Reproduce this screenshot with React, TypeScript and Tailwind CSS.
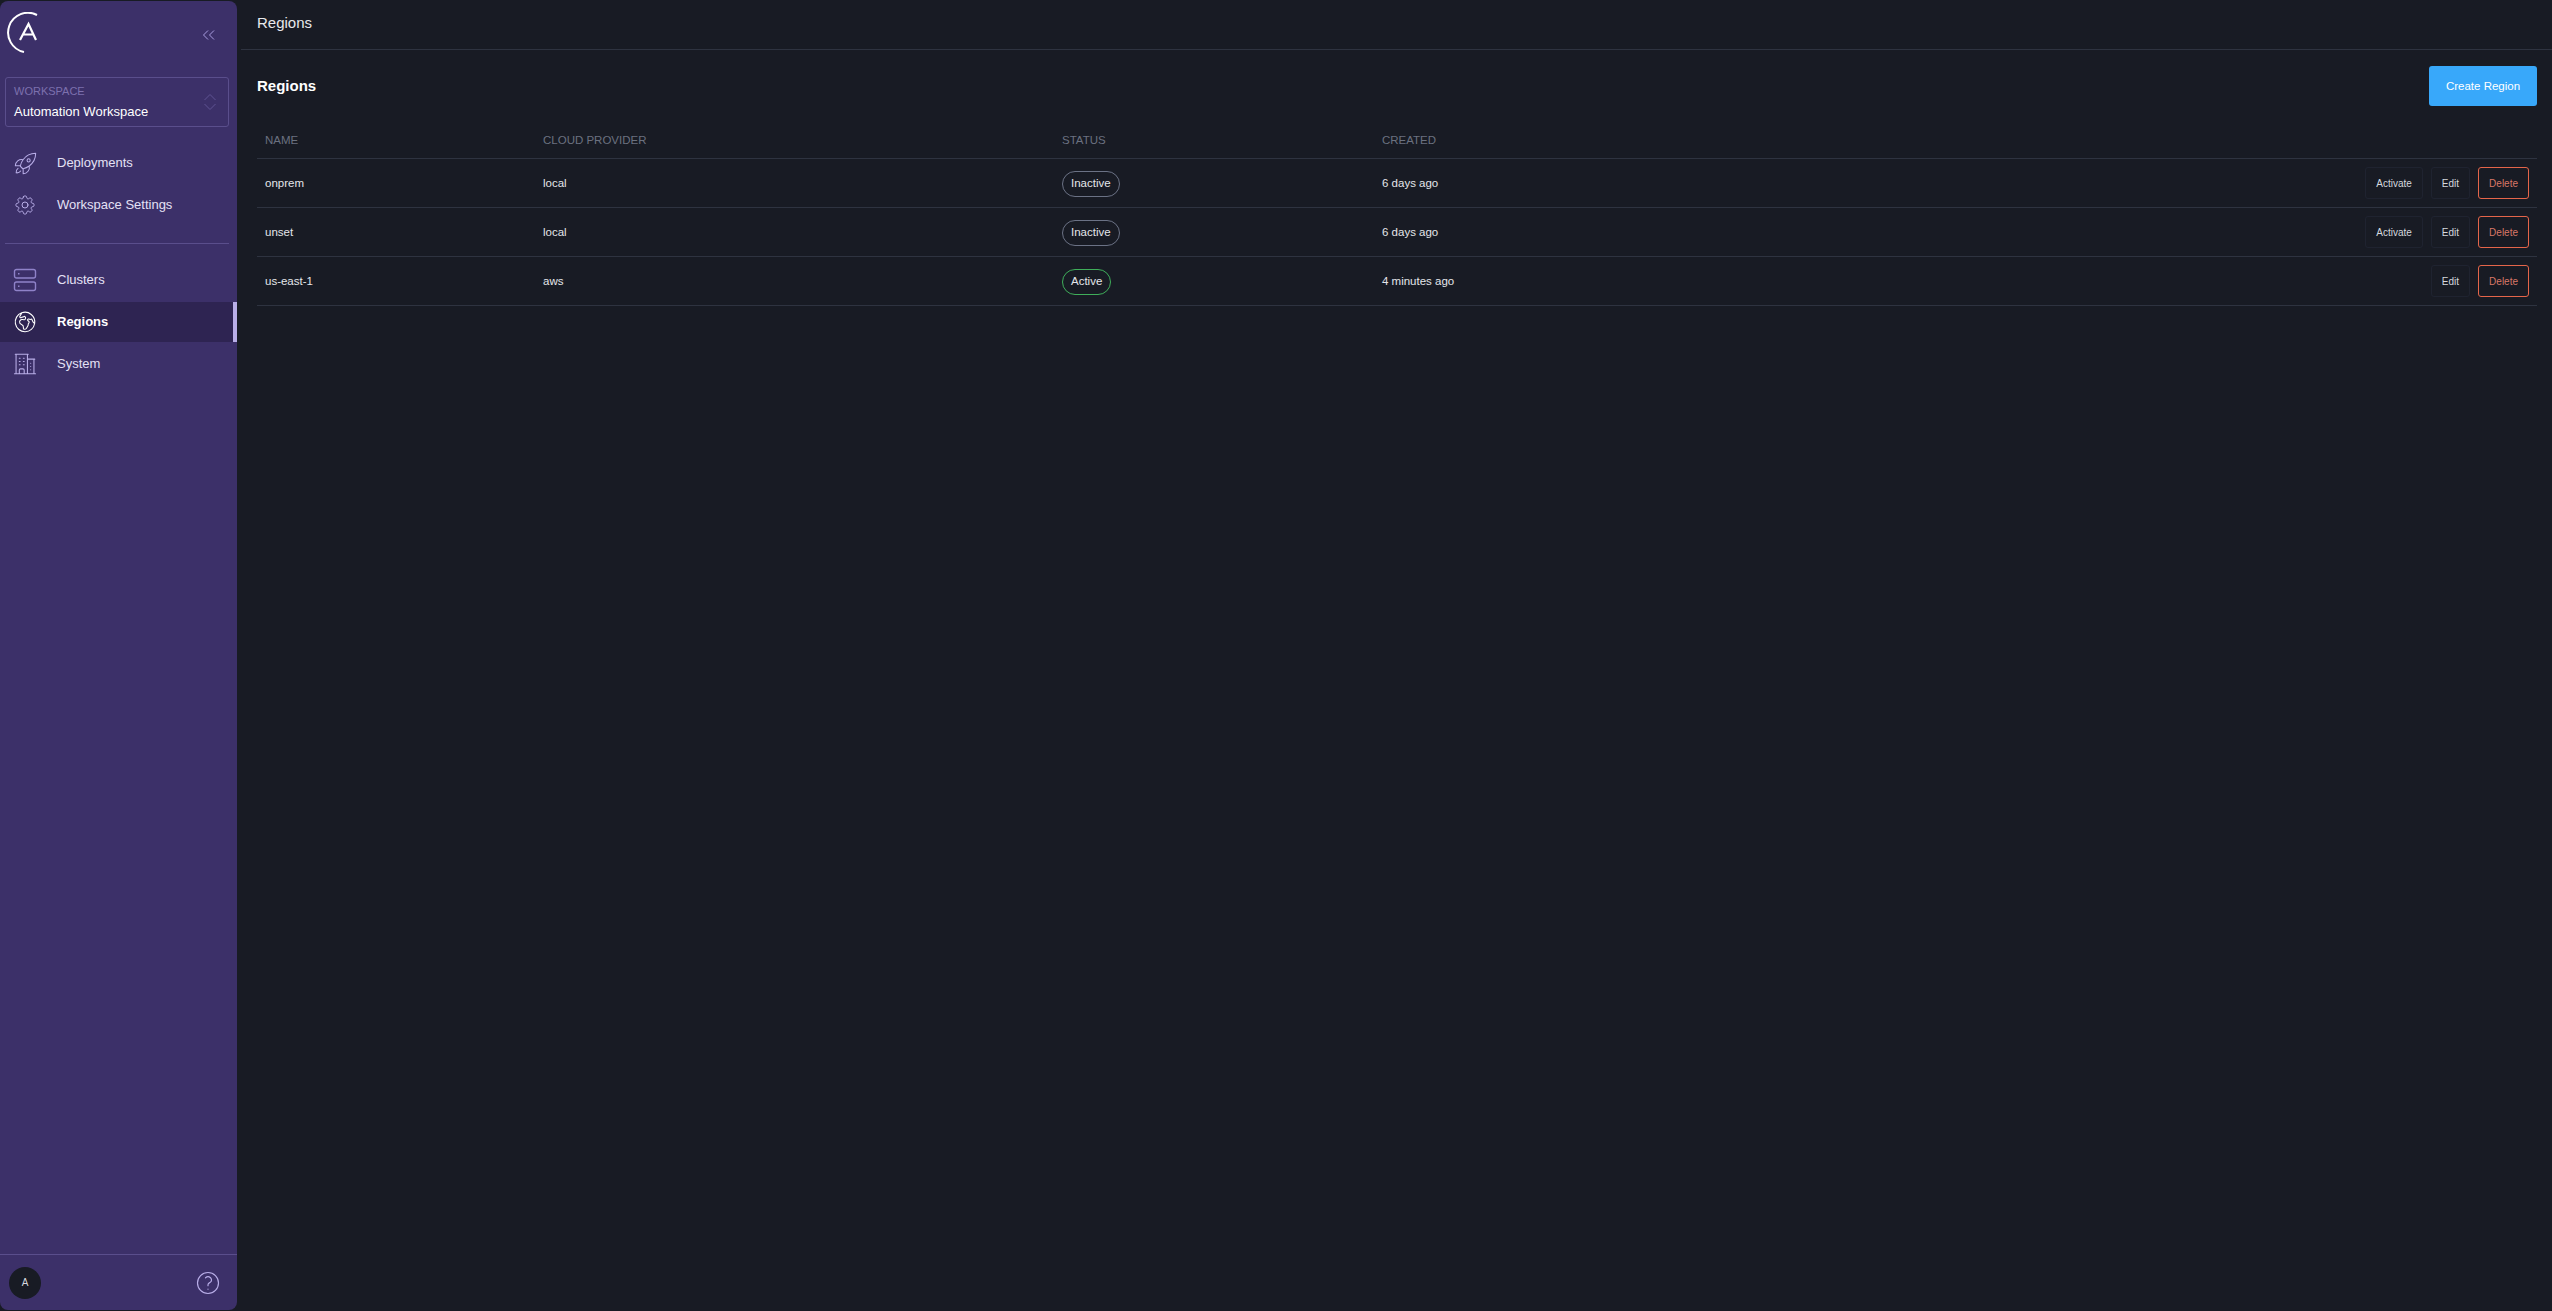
import { ReactNode } from 'react'
import {
  HiOutlineRocketLaunch,
  HiOutlineCog8Tooth,
  HiOutlineGlobeEuropeAfrica,
  HiOutlineBuildingOffice2,
  HiOutlineQuestionMarkCircle,
} from 'react-icons/hi2'

const regions = [
  { name: 'onprem', cloud: 'local', active: false, created: '6 days ago' },
  { name: 'unset', cloud: 'local', active: false, created: '6 days ago' },
  { name: 'us-east-1', cloud: 'aws', active: true, created: '4 minutes ago' },
]

function Logo() {
  return (
    <svg className="w-[32px] h-[42px]" viewBox="0 0 32 42" fill="none" stroke="#fff">
      <path d="M30 3A19.8 19.8 0 1 0 17 40" strokeWidth={2} />
      <path d="M13 28L21.5 12L29 28M15.5 22.5H26.5" strokeWidth={2.2} />
    </svg>
  )
}

function ClustersIcon() {
  return (
    <svg className="w-[24px] h-[24px]" viewBox="0 0 24 24" fill="none" stroke="#8f82c9" strokeWidth={1.4}>
      <rect x="1.5" y="1.5" width="21" height="8.5" rx="2" />
      <rect x="1.5" y="14" width="21" height="8.5" rx="2" />
      <rect x="5" y="5" width="1.5" height="1.5" fill="#8f82c9" stroke="none" />
      <rect x="5" y="17.5" width="1.5" height="1.5" fill="#8f82c9" stroke="none" />
    </svg>
  )
}

function NavItem({ icon, label, active }: { icon: ReactNode; label: string; active?: boolean }) {
  return (
    <div
      className={`flex items-center h-10 text-[13px] ${
        active
          ? 'bg-[#2e2452] border-r-4 border-[#b9aee8] font-bold text-white'
          : 'text-[#e4e0f5]'
      }`}
    >
      <div className="w-[57px] flex justify-center pr-[7px]">{icon}</div>
      <span>{label}</span>
    </div>
  )
}

function ActionButton({ label, danger }: { label: string; danger?: boolean }) {
  return (
    <button
      className={`h-[32px] px-[10px] pt-px rounded-[3px] border text-[10px] ${
        danger ? 'border-[#e5654a] text-[#d97767]' : 'border-[#1f2330] text-[#d5d8de]'
      }`}
    >
      {label}
    </button>
  )
}

export default function App() {
  return (
    <div className="flex h-[1311px] w-[2552px] overflow-hidden bg-[#181b24] font-['Liberation_Sans',Arial,sans-serif]">
      {/* Sidebar */}
      <aside className="w-[237px] mt-px mb-px rounded-lg bg-[#3c3069] flex flex-col shrink-0">
        <div className="flex items-start justify-between h-[76px] pl-[7px] pr-[21px] pt-[11px]">
          <Logo />
          <svg className="w-[14px] h-[14px] mt-[16px]" viewBox="0 0 14 14" fill="none" stroke="#a99de0" strokeWidth={1}>
            <path d="M6 2.5L1.5 7L6 11.5M12 2.5L7.5 7L12 11.5" />
          </svg>
        </div>
        <div className="ml-[5px] mr-[8px] h-[50px] rounded-[3px] border border-[#5a4e8c] pl-[8px] flex items-center justify-between pr-[11px]">
          <div className="-mt-[2px]">
            <div className="text-[11px] leading-[14px] text-[#7d71ae] mb-[6px]">WORKSPACE</div>
            <div className="text-[13px] leading-[15px] text-white">Automation Workspace</div>
          </div>
          <svg className="w-[14px] h-[18px]" viewBox="0 0 14 18" fill="none" stroke="#5f5393" strokeWidth={1}>
            <path d="M1.5 7L7 1.5L12.5 7M1.5 11L7 16.5L12.5 11" />
          </svg>
        </div>

        <nav className="mt-[16px] flex flex-col gap-0.5">
          <NavItem icon={<HiOutlineRocketLaunch className="w-[25px] h-[25px] text-[#b9aee8]" style={{ strokeWidth: 1 }} />} label="Deployments" />
          <NavItem icon={<HiOutlineCog8Tooth className="w-[24px] h-[24px] text-[#b9aee8]" style={{ strokeWidth: 1 }} />} label="Workspace Settings" />
        </nav>
        <div className="mt-[18px] mb-[16px] ml-[5px] mr-[8px] border-t border-[#5a4e8c]" />
        <nav className="flex flex-col gap-0.5">
          <NavItem icon={<ClustersIcon />} label="Clusters" />
          <NavItem icon={<HiOutlineGlobeEuropeAfrica className="w-[26px] h-[26px] text-white" style={{ strokeWidth: 1 }} />} label="Regions" active />
          <NavItem icon={<HiOutlineBuildingOffice2 className="w-[26px] h-[26px] text-[#b9aee8]" style={{ strokeWidth: 1 }} />} label="System" />
        </nav>

        <div className="mt-auto h-[56px] border-t border-[#5a4e8c] flex items-center justify-between pl-[9px] pr-[15px]">
          <div className="w-8 h-8 rounded-full bg-[#181b24] text-[#d5d8de] text-[10px] flex items-center justify-center">A</div>
          <HiOutlineQuestionMarkCircle className="w-[28px] h-[28px] text-[#b9aee8]" style={{ strokeWidth: 1 }} />
        </div>
      </aside>

      {/* Main */}
      <main className="flex-1 ml-1 min-w-0">
        <header className="h-[50px] border-b border-[#2e3340] flex items-center pl-4 pb-[3px] text-[15px] text-[#e8e9ec]">
          Regions
        </header>
        <div className="pl-4 pr-[15px] pt-4">
          <div className="flex items-center justify-between">
            <h1 className="text-[15px] font-bold text-white">Regions</h1>
            <button className="w-[108px] h-10 pt-px rounded-[3px] bg-[#38a8fa] text-white text-[11.5px]">Create Region</button>
          </div>
          <table className="w-full mt-4 table-fixed text-[11.5px] text-[#e4e6ea]">
            <colgroup>
              <col className="w-[278px]" />
              <col className="w-[519px]" />
              <col className="w-[320px]" />
              <col />
              <col className="w-[400px]" />
            </colgroup>
            <thead>
              <tr className="h-[36px] border-b border-[#2e3340] text-left text-[11.5px] text-[#6b7180]">
                <th className="px-2 pt-px font-normal">NAME</th>
                <th className="px-2 pt-px font-normal">CLOUD PROVIDER</th>
                <th className="px-2 pt-px font-normal">STATUS</th>
                <th className="px-2 pt-px font-normal">CREATED</th>
                <th />
              </tr>
            </thead>
            <tbody>
              {regions.map((r) => (
                <tr key={r.name} className="h-[49px] border-b border-[#2e3340]">
                  <td className="px-2 pt-[2px]">{r.name}</td>
                  <td className="px-2 pt-[2px]">{r.cloud}</td>
                  <td className="px-2 pt-[2px]">
                    <span
                      className={`inline-flex items-center h-[26px] px-[8px] rounded-full border ${
                        r.active ? 'border-[#3fae5a]' : 'border-[#6b7285]'
                      }`}
                    >
                      {r.active ? 'Active' : 'Inactive'}
                    </span>
                  </td>
                  <td className="px-2 pt-[2px]">{r.created}</td>
                  <td className="px-2">
                    <div className="flex justify-end gap-2">
                      {!r.active && <ActionButton label="Activate" />}
                      <ActionButton label="Edit" />
                      <ActionButton label="Delete" danger />
                    </div>
                  </td>
                </tr>
              ))}
            </tbody>
          </table>
        </div>
      </main>
    </div>
  )
}
